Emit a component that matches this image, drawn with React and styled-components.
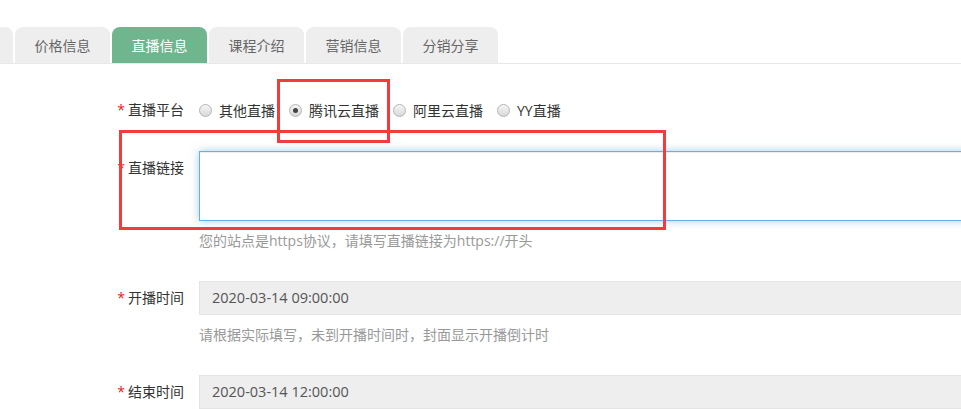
import React from "react";
import styled, { createGlobalStyle } from "styled-components";

const GlobalStyle = createGlobalStyle`
  html, body {
    margin: 0;
    padding: 0;
    background: #fff;
    font-family: "Open Sans", "Noto Sans CJK SC", sans-serif;
  }
`;

const Page = styled.div`
  position: relative;
  width: 100%;
  height: 409px;
  padding-top: 27px;
  overflow: hidden;
  box-sizing: border-box;
`;

const TabBar = styled.div`
  display: flex;
  gap: 2px;
  width: 1200px;
  border-bottom: 1px solid #e8e8e8;
`;

const Tab = styled.div`
  flex: none;
  width: 95px;
  height: 36px;
  display: flex;
  align-items: center;
  justify-content: center;
  border-radius: 8px 8px 0 0;
  font-size: 14px;
  color: ${(props) => (props.active ? "#fff" : "#666")};
  background: ${(props) => (props.active ? "#6fb68f" : "#eeeeee")};

  &:first-child {
    margin-left: -82px;
  }
`;

const Form = styled.form`
  padding-top: 29px;
  width: 1200px;
`;

const FormGroup = styled.div`
  display: grid;
  grid-template-columns: 184px 1fr;
  column-gap: 15px;
  margin-bottom: 24px;
`;

const Label = styled.label`
  text-align: right;
  font-size: 14px;
  line-height: 34px;
  color: #333;
`;

const Required = styled.span`
  color: #e8201a;
  margin-right: 3px;
`;

const RadioRow = styled.div`
  display: flex;
  align-items: center;
  height: 34px;
`;

const RadioItem = styled.span`
  display: flex;
  align-items: center;
  gap: 7px;
  margin-right: 14px;
  font-size: 14px;
  color: #333;
`;

const RadioCircle = styled.span`
  position: relative;
  width: 11px;
  height: 11px;
  border-radius: 50%;
  border: 1px solid #b4b4b4;
  background: linear-gradient(#f6f6f6, #d8d8d8);

  &::after {
    content: "";
    display: ${(props) => (props.checked ? "block" : "none")};
    position: absolute;
    left: 3px;
    top: 3px;
    width: 5px;
    height: 5px;
    border-radius: 50%;
    background: #444;
  }
`;

const TextArea = styled.div`
  height: 70px;
  box-sizing: border-box;
  border: 1px solid #66afe9;
  background: #fff;
  box-shadow: inset 0 1px 1px rgba(0, 0, 0, 0.075),
    0 0 8px rgba(102, 175, 233, 0.6);
`;

const ReadonlyInput = styled.div`
  height: 34px;
  box-sizing: border-box;
  padding: 0 12px;
  border: 1px solid #e4e4e4;
  background: #eeeeee;
  font-size: 14.5px;
  line-height: 32px;
  color: #555;
`;

const Help = styled.div`
  grid-column: 2;
  margin: 10px 0 6px;
  font-size: 14px;
  line-height: 20px;
  color: #999;
`;

const Annotation = styled.div`
  position: absolute;
  left: ${(props) => props.x}px;
  top: ${(props) => props.y}px;
  width: ${(props) => props.w}px;
  height: ${(props) => props.h}px;
  box-sizing: border-box;
  border: 3px solid #f43b3b;
  pointer-events: none;
`;

const tabs = ["", "价格信息", "直播信息", "课程介绍", "营销信息", "分销分享"];
const platforms = [
  { name: "其他直播", checked: false },
  { name: "腾讯云直播", checked: true },
  { name: "阿里云直播", checked: false },
  { name: "YY直播", checked: false },
];

export default function App() {
  return (
    <Page>
      <GlobalStyle />
      <TabBar>
        {tabs.map((t, i) => (
          <Tab key={i} active={t === "直播信息"}>
            {t}
          </Tab>
        ))}
      </TabBar>

      <Form>
        <FormGroup>
          <Label>
            <Required>*</Required>直播平台
          </Label>
          <RadioRow>
            {platforms.map((p) => (
              <RadioItem key={p.name}>
                <RadioCircle checked={p.checked} />
                {p.name}
              </RadioItem>
            ))}
          </RadioRow>
        </FormGroup>

        <FormGroup>
          <Label>
            <Required>*</Required>直播链接
          </Label>
          <TextArea />
          <Help>您的站点是https协议，请填写直播链接为https://开头</Help>
        </FormGroup>

        <FormGroup>
          <Label>
            <Required>*</Required>开播时间
          </Label>
          <ReadonlyInput>2020-03-14 09:00:00</ReadonlyInput>
          <Help>请根据实际填写，未到开播时间时，封面显示开播倒计时</Help>
        </FormGroup>

        <FormGroup>
          <Label>
            <Required>*</Required>结束时间
          </Label>
          <ReadonlyInput>2020-03-14 12:00:00</ReadonlyInput>
        </FormGroup>
      </Form>

      <Annotation x={277} y={79} w={113} h={64} />
      <Annotation x={119} y={130} w={547} h={100} />
    </Page>
  );
}
